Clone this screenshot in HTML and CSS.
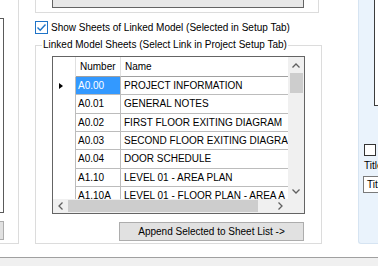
FILE: index.html
```html
<!DOCTYPE html>
<html>
<head>
    <title>Linked Model Sheets</title>
    <link rel="stylesheet" href="styles.css">
</head>
<body>
    <div class="workspace">
        <div class="left-col">
            <div class="list-stub"></div>
            <div class="btn-stub"></div>
        </div>

        <div class="mid-col">
            <div class="top-group">
                <div class="gray-list"></div>
            </div>

            <label class="check-row">
                <span class="checkbox checked">
                    <svg width="11" height="11" viewBox="0 0 11 11"><polyline points="1.5,5.5 4.2,8.2 9.5,2.5" fill="none" stroke="#1f74c8" stroke-width="1.4"/></svg>
                </span>
                <span>Show Sheets of Linked Model (Selected in Setup Tab)</span>
            </label>

            <fieldset class="linked-group">
                <legend>Linked Model Sheets (Select Link in Project Setup Tab)</legend>

                <div class="sheet-grid">
                    <div class="grid-body">
                        <div class="cell head row-head"></div>
                        <div class="cell head">Number</div>
                        <div class="cell head">Name</div>

                        <div class="cell row-head"><span class="arrow"></span></div>
                        <div class="cell num selected">A0.00</div>
                        <div class="cell">PROJECT INFORMATION</div>

                        <div class="cell row-head"></div>
                        <div class="cell num">A0.01</div>
                        <div class="cell">GENERAL NOTES</div>

                        <div class="cell row-head"></div>
                        <div class="cell num">A0.02</div>
                        <div class="cell">FIRST FLOOR EXITING DIAGRAM</div>

                        <div class="cell row-head"></div>
                        <div class="cell num">A0.03</div>
                        <div class="cell">SECOND FLOOR EXITING DIAGRAM</div>

                        <div class="cell row-head"></div>
                        <div class="cell num">A0.04</div>
                        <div class="cell">DOOR SCHEDULE</div>

                        <div class="cell row-head"></div>
                        <div class="cell num">A1.10</div>
                        <div class="cell">LEVEL 01 - AREA PLAN</div>

                        <div class="cell row-head"></div>
                        <div class="cell num">A1.10A</div>
                        <div class="cell">LEVEL 01 - FLOOR PLAN - AREA A</div>
                    </div>

                    <div class="vscroll">
                        <span class="sb-arrow"><svg width="8" height="5" viewBox="0 0 8 5"><polyline points="0.5,4.5 4,1 7.5,4.5" fill="none" stroke="#606060" stroke-width="1.3"/></svg></span>
                        <span class="sb-thumb"></span>
                        <span class="sb-track"></span>
                        <span class="sb-arrow"><svg width="8" height="5" viewBox="0 0 8 5"><polyline points="0.5,0.5 4,4 7.5,0.5" fill="none" stroke="#606060" stroke-width="1.3"/></svg></span>
                    </div>

                    <div class="hscroll">
                        <span class="sb-arrow"><svg width="5" height="8" viewBox="0 0 5 8"><polyline points="4.5,0.5 1,4 4.5,7.5" fill="none" stroke="#606060" stroke-width="1.3"/></svg></span>
                        <span class="sb-thumb"></span>
                        <span class="sb-track"></span>
                        <span class="sb-arrow"><svg width="5" height="8" viewBox="0 0 5 8"><polyline points="0.5,0.5 4,4 0.5,7.5" fill="none" stroke="#606060" stroke-width="1.3"/></svg></span>
                    </div>

                    <div class="corner"></div>
                </div>

                <button class="append-btn">Append Selected to Sheet List -&gt;</button>
            </fieldset>
        </div>

        <div class="side-panel">
            <div class="side-box"></div>
            <span class="checkbox side-check"></span>
            <div class="side-label">Title</div>
            <div class="side-input">Title</div>
        </div>
    </div>

    <div class="statusbar"></div>
</body>
</html>
```

FILE: styles.css
```css
* {
    margin: 0;
    padding: 0;
    box-sizing: border-box;
}

body {
    width: 378px;
    height: 266px;
    overflow: hidden;
    background: #fff;
    font-family: "Liberation Sans", Arial, sans-serif;
    font-size: 10px;
    color: #000;
}

.workspace {
    display: flex;
    height: 257px;
}

/* left column (cut off) */
.left-col {
    width: 19px;
    height: 244px;
    flex-shrink: 0;
    border-right: 1px solid #dcdcdc;
    border-bottom: 1px solid #dcdcdc;
}

.list-stub {
    width: 4px;
    height: 195px;
    margin-top: 18px;
    background: #fff;
    border: 1px solid #5a5a5a;
    border-left: none;
}

.btn-stub {
    width: 4px;
    height: 19px;
    margin-top: 8px;
    background: #e1e1e1;
    border: 1px solid #adadad;
    border-left: none;
}

/* middle column */
.mid-col {
    width: 287px;
    margin-left: 16px;
    flex-shrink: 0;
    display: flex;
    flex-direction: column;
}

.top-group {
    width: 284px;
    height: 13px;
    border: 1px solid #dcdcdc;
    border-top: none;
}

.gray-list {
    width: 252px;
    height: 8px;
    margin-left: 16px;
    background: #e8e8e8;
    border: 1px solid #646464;
    border-top: none;
}

.check-row {
    display: flex;
    align-items: center;
    gap: 3px;
    height: 13px;
    margin-top: 8px;
}

.checkbox {
    width: 13px;
    height: 13px;
    flex-shrink: 0;
    display: flex;
    align-items: center;
    justify-content: center;
    background: #fff;
    border: 1px solid #333;
}

.checkbox.checked {
    border-color: #1f74c8;
}

.linked-group {
    width: 287px;
    height: 205px;
    margin-top: 5px;
    border: 1px solid #dcdcdc;
    padding: 0;
    min-width: 0;
}

.linked-group legend {
    margin-left: 6px;
    padding: 0 1px;
    line-height: 12px;
}

/* data grid */
.sheet-grid {
    width: 253px;
    height: 158px;
    margin: 5px 0 0 16px;
    border: 1px solid #646464;
    display: grid;
    grid-template-columns: 235px 16px;
    grid-template-rows: 142px 14px;
    background: #fff;
}

.grid-body {
    overflow: hidden;
    display: grid;
    grid-template-columns: 23px 45px 200px;
    grid-template-rows: 20px 18px 19px 18px 18px 19px 18px 18px;
}

.cell {
    padding-left: 3px;
    line-height: 17px;
    white-space: nowrap;
    overflow: hidden;
    border-right: 1px solid #bcbcbc;
    border-bottom: 1px solid #bcbcbc;
}

.cell.head {
    padding-left: 4px;
    line-height: 19px;
    border-bottom-color: #a0a0a0;
    border-right-color: #e0e0e0;
}

.cell.head.row-head {
    border-right-color: #e0e0e0;
}

.cell.row-head {
    border-bottom: none;
    border-right-color: #bcbcbc;
    display: flex;
    align-items: center;
    padding-left: 6px;
}

.cell.num {
    padding-left: 2px;
}

.cell.selected {
    background: #3399ff;
    color: #fff;
}

.arrow {
    width: 0;
    height: 0;
    border-top: 3px solid transparent;
    border-bottom: 3px solid transparent;
    border-left: 4px solid #000;
}

.vscroll {
    background: #f0f0f0;
    display: flex;
    flex-direction: column;
    align-items: center;
}

.vscroll .sb-arrow {
    height: 16px;
    width: 100%;
    display: flex;
    align-items: center;
    justify-content: center;
}

.vscroll .sb-thumb {
    width: 13px;
    height: 20px;
    background: #cdcdcd;
}

.vscroll .sb-track {
    flex: 1;
}

.hscroll {
    background: #f0f0f0;
    display: flex;
    align-items: center;
}

.hscroll .sb-arrow {
    width: 15px;
    height: 100%;
    display: flex;
    align-items: center;
    justify-content: center;
}

.hscroll .sb-thumb {
    width: 190px;
    height: 12px;
    background: #cdcdcd;
}

.hscroll .sb-track {
    flex: 1;
}

.corner {
    background: #f0f0f0;
}

.append-btn {
    display: block;
    width: 185px;
    height: 19px;
    margin: 8px 0 0 83px;
    background: #e1e1e1;
    border: 1px solid #adadad;
    font-family: inherit;
    font-size: 10px;
    color: #000;
}

/* right panel (cut off) */
.side-panel {
    width: 21px;
    height: 244px;
    margin-left: 36px;
    flex-shrink: 0;
    background: #eaf3fc;
    border-left: 1px solid #d6e4f2;
    border-bottom: 1px solid #d6e4f2;
    border-bottom-left-radius: 3px;
}

.side-box {
    width: 6px;
    height: 106px;
    margin-left: 15px;
    background: #fff;
    border-left: 1px solid #3c3c3c;
    border-bottom: 1px solid #3c3c3c;
}

.side-check {
    margin: 38px 0 0 5px;
    width: 12px;
    height: 12px;
}

.side-label {
    margin: 4px 0 0 5px;
    white-space: nowrap;
}

.side-input {
    margin: 5px 0 0 4px;
    height: 17px;
    padding-left: 3px;
    line-height: 15px;
    white-space: nowrap;
    overflow: hidden;
    background: #fff;
    border: 1px solid #7a7a7a;
    border-right: none;
}

.statusbar {
    height: 9px;
    background: #f0f0f0;
    border-top: 1px solid #a0a0a0;
}
```
